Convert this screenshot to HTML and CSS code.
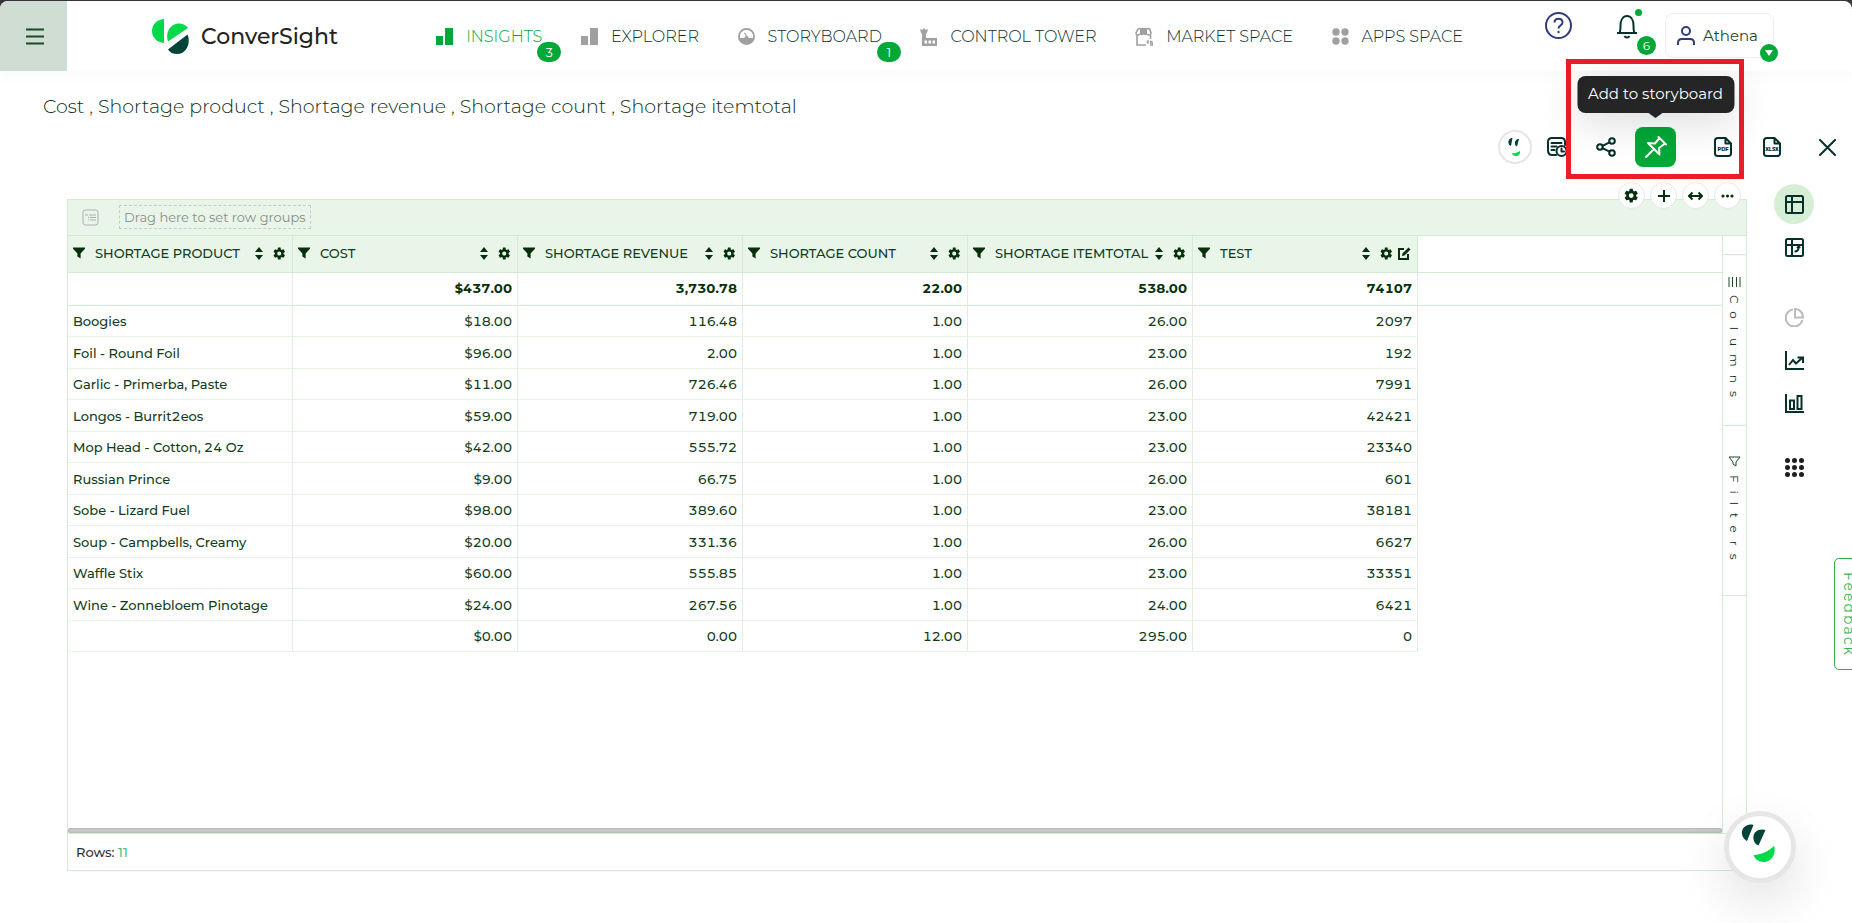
FILE: index.html
```html
<!DOCTYPE html>
<html lang="en">
<head>
  <meta charset="UTF-8">
  <title>ConverSight</title>
  <link rel="stylesheet" href="styles.css">
</head>
<body>
  <!-- shared icons -->
  <svg class="sprite" aria-hidden="true">
    <symbol id="i-filter" viewBox="0 0 12 12"><path d="M0 .5h12v1.2L7.6 6.6V11.5L4.4 9.4V6.6L0 1.7z"/></symbol>
    <symbol id="i-sort" viewBox="0 0 8 13"><path d="M4 0l4 5H0zM4 13L0 8h8z"/></symbol>
    <symbol id="i-gear" viewBox="0 0 24 24"><path d="M19.4 13a7.5 7.5 0 0 0 0-2l2.300-1.800c.3-.2.300-.5.2-.8l-2.200-3.800c-.2-.3-.5-.4-.8-.3l-2.700 1.100a8 8 0 0 0-1.700-1L14 1.600c0-.3-.3-.6-.6-.6H9.600c-.3 0-.6.3-.6.6l-.4 2.800a8 8 0 0 0-1.700 1L4.200 4.300c-.3-.1-.6 0-.8.3L1.200 8.400c-.2.300-.1.600.2.800L3.700 11a7.500 7.500 0 0 0 0 2l-2.300 1.800c-.3.2-.4.5-.2.800l2.200 3.800c.2.300.5.400.8.300l2.700-1.100a8 8 0 0 0 1.700 1l.4 2.800c0 .3.300.6.6.6h3.800c.3 0 .6-.3.6-.6l.4-2.800a8 8 0 0 0 1.700-1l2.700 1.100c.3.100.6 0 .8-.3l2.200-3.800c.2-.3.1-.6-.2-.8zM11.500 15.800a3.800 3.800 0 1 1 0-7.600 3.800 3.800 0 0 1 0 7.600z"/></symbol>
    <symbol id="i-bars" viewBox="0 0 17 17"><path d="M0 8h7v9H0zM9 0h8v17H9z"/></symbol>
  </svg>

  <div class="app">
    <header class="header">
      <button class="menu-btn" aria-label="Menu">
        <svg width="18" height="17" viewBox="0 0 18 17"><path d="M0 1.500h18M0 8.500h18M0 15.500h18"/></svg>
      </button>
      <a class="logo" href="#">
        <svg width="37" height="35" viewBox="0 0 37 35">
          <path fill="#00d94a" d="M12 0v24C5 23.500 0 18.500 0 12S5 .5 12 0z"/>
          <path fill="#00d94a" d="M16 22.500C13 14 18 4.500 27 4.500c3.500 0 7 1.500 9 4.500z"/>
          <path fill="#004438" d="M35.500 15.500C39 23 35 35 25 35c-4 0-7-1.500-9-4.500z"/>
        </svg>
        <span>ConverSight</span>
      </a>
      <nav class="nav">
        <a class="nav-link active" href="#"><svg width="17" height="17"><use href="#i-bars"/></svg>INSIGHTS<span class="badge">3</span></a>
        <a class="nav-link" href="#"><svg width="17" height="17"><use href="#i-bars"/></svg>EXPLORER</a>
        <a class="nav-link" href="#">
          <svg width="17" height="17" viewBox="0 0 17 17"><path fill-rule="evenodd" d="M8.500 0a8.500 8.500 0 1 1 0 17 8.500 8.500 0 0 1 0-17zm0 1.800A6.700 6.700 0 0 0 2 10h4.500a2.200 2.200 0 0 1 1.200-2L6 5l.9-.5L9 7.700c1 .4 1.500 1.300 1.500 2.300H15a6.700 6.700 0 0 0-6.500-8.200z"/></svg>STORYBOARD<span class="badge">1</span></a>
        <a class="nav-link" href="#">
          <svg width="17" height="18" viewBox="0 0 17 18"><path fill-rule="evenodd" d="M3.500 0h1.200v1.600H8L6.800 5.500H6V10h11v8H2V5.500h-.8L0 1.600h3.500zM4.500 12.500v3h2.500v-3zm4 0v3H11v-3zm4 0v3H15v-3z"/></svg>CONTROL TOWER</a>
        <a class="nav-link" href="#">
          <svg width="18" height="18" viewBox="0 0 18 18"><path d="M5 0h7v6.500c-1 1-2.500 1-3.500 0-1 1-2.500 1-3.500 0z"/><path fill="none" stroke="#a0a0a0" stroke-width="1.600" d="M3 .8h11.500L16 5c0 2-2.500 2.800-4 1M3 .8L1 5c0 2 2.500 2.800 4 1M2 7.500V17h9M15.500 7v4"/><path fill="none" stroke="#a0a0a0" stroke-width="1.300" d="M13 12v4M11.500 14h1.500M17.500 13.500h-2v1.700h2V17h-2.500"/></svg>MARKET SPACE</a>
        <a class="nav-link" href="#">
          <svg width="17" height="17" viewBox="0 0 17 17"><circle cx="4" cy="4" r="3.700"/><circle cx="13" cy="4" r="3.700"/><circle cx="4" cy="13" r="3.700"/><circle cx="13" cy="13" r="3.700"/></svg>APPS SPACE</a>
      </nav>
      <div class="header-tools">
        <button class="help-btn" aria-label="Help">
          <svg width="27" height="27" viewBox="0 0 27 27"><circle cx="13.500" cy="13.500" r="12.500"/><path d="M9.500 10.500c0-5 8-5 8 0 0 3-4 3-4 6"/><circle class="dot" cx="13.500" cy="20" r="1.200"/></svg>
        </button>
        <button class="bell-btn" aria-label="Notifications">
          <svg width="22" height="25" viewBox="0 0 22 25"><path d="M1 19h20M3.500 19c1-2 1-4 1-7.500C4.500 6 7 2 11 2s6.500 4 6.500 9.500c0 3.500 0 5.500 1 7.500M8.500 22c1 2 4 2 5 0"/></svg>
          <span class="bell-dot"></span>
          <span class="bell-count">6</span>
        </button>
        <button class="user-btn">
          <svg width="18" height="20" viewBox="0 0 18 20"><circle cx="9" cy="5" r="4"/><path d="M1 19v-2c0-3 2-4 4-4h8c2 0 4 1 4 4v2"/></svg>
          Athena
          <span class="user-arrow"></span>
        </button>
      </div>
    </header>

    <h1 class="title">Cost , Shortage product , Shortage revenue , Shortage count , Shortage itemtotal</h1>

    <div class="toolbar">
      <div class="tool-group">
        <button class="tool" aria-label="Ask Athena">
          <span class="face-circle">
            <svg width="14" height="20" viewBox="0 0 14 20"><path class="face-eye" d="M4.500 1C2 .5 0 3 .5 6c.2 1.500 1 2.500 2.500 3zM11 2C8.500 1.500 6.500 4 7 7c.2 1.500 1 2 2 2.500z"/><path class="face-mouth" d="M4 16c3 .5 6-.5 8-2 .5 3-1.500 5-4 5s-3.500-1-4-3z"/></svg>
          </span>
        </button>
        <button class="tool" aria-label="History">
          <svg width="20" height="20" viewBox="0 0 20 20"><path d="M18 8V5c0-3-1.500-4-4-4H5C2.500 1 1 2.500 1 5v8c0 3 1.500 5 4 5h4M4.500 6h10M4.500 9.500h5M4.500 13h3"/><circle cx="14.500" cy="14" r="5"/><path d="M14.500 11.500v3h2.500"/></svg>
        </button>
      </div>
      <button class="tool" aria-label="Share">
        <svg width="20" height="20" viewBox="0 0 20 20"><circle cx="4" cy="10" r="2.800"/><circle cx="16" cy="4" r="2.800"/><circle cx="16" cy="16" r="2.800"/><path d="M6.500 8.800l7-3.500M6.500 11.200l7 3.500"/></svg>
      </button>
      <div class="pin">
        <button class="tool pin-btn" aria-label="Add to storyboard">
          <svg width="22" height="22" viewBox="0 0 22 22"><path d="M13.500 1l7.500 7.500M14.500 2L10 7.500l-7-.5 11.500 11.500-.5-6.500L20 7.500M8.500 13.500L1 21"/></svg>
        </button>
        <div class="highlight"></div>
        <div class="tooltip" role="tooltip">Add to storyboard</div>
      </div>
      <button class="tool" aria-label="Export PDF">
        <svg width="18" height="20" viewBox="0 0 18 20"><path d="M11.500 1H4C2 1 1 2 1 3.500v13C1 18 2 19 4 19h10c2 0 3-1 3-2.500v-10L11.500 1v5.500H17"/><text x="9" y="14">PDF</text></svg>
      </button>
      <button class="tool tool-xlsx" aria-label="Export XLSX">
        <svg width="18" height="20" viewBox="0 0 18 20"><path d="M11.500 1H4C2 1 1 2 1 3.500v13C1 18 2 19 4 19h10c2 0 3-1 3-2.500v-10L11.500 1v5.500H17"/><text x="9" y="14">XLSX</text></svg>
      </button>
      <button class="tool" aria-label="Close">
        <svg width="17" height="17" viewBox="0 0 17 17"><path d="M1 1l15 15M16 1L1 16"/></svg>
      </button>
    </div>

    <main class="workspace">
      <section class="grid">
        <div class="grid-actions">
          <button aria-label="Settings"><svg width="15" height="15"><use href="#i-gear"/></svg></button>
          <button aria-label="Add column"><svg width="12" height="12" viewBox="0 0 12 12"><path class="line" d="M6 0v12M0 6h12"/></svg></button>
          <button aria-label="Fit width"><svg width="15" height="10" viewBox="0 0 15 10"><path class="line" d="M1 5h13M4.500 1.500L1 5l3.500 3.500M10.500 1.500L14 5l-3.500 3.500"/></svg></button>
          <button aria-label="More"><svg width="13" height="4" viewBox="0 0 13 4"><circle cx="2" cy="2" r="1.600"/><circle cx="6.500" cy="2" r="1.600"/><circle cx="11" cy="2" r="1.600"/></svg></button>
        </div>

        <div class="group-bar">
          <svg width="17" height="17" viewBox="0 0 17 17"><rect x="1" y="1" width="15" height="15" rx="2.500"/><path d="M3 6h3M7 6h7M6 8.500h1M8 8.500h6M6 11h1M8 11h6"/></svg>
          <span class="drop-zone">Drag here to set row groups</span>
        </div>

        <div class="grid-body">
          <div class="table-pane">
            <table>
              <colgroup>
                <col class="col"><col class="col"><col class="col"><col class="col"><col class="col"><col class="col"><col>
              </colgroup>
              <thead>
                <tr>
                  <th><div class="head"><svg width="12" height="12"><use href="#i-filter"/></svg><span>SHORTAGE PRODUCT</span><svg width="8" height="13"><use href="#i-sort"/></svg><svg width="13" height="13"><use href="#i-gear"/></svg></div></th>
                  <th><div class="head"><svg width="12" height="12"><use href="#i-filter"/></svg><span>COST</span><svg width="8" height="13"><use href="#i-sort"/></svg><svg width="13" height="13"><use href="#i-gear"/></svg></div></th>
                  <th><div class="head"><svg width="12" height="12"><use href="#i-filter"/></svg><span>SHORTAGE REVENUE</span><svg width="8" height="13"><use href="#i-sort"/></svg><svg width="13" height="13"><use href="#i-gear"/></svg></div></th>
                  <th><div class="head"><svg width="12" height="12"><use href="#i-filter"/></svg><span>SHORTAGE COUNT</span><svg width="8" height="13"><use href="#i-sort"/></svg><svg width="13" height="13"><use href="#i-gear"/></svg></div></th>
                  <th><div class="head"><svg width="12" height="12"><use href="#i-filter"/></svg><span>SHORTAGE ITEMTOTAL</span><svg width="8" height="13"><use href="#i-sort"/></svg><svg width="13" height="13"><use href="#i-gear"/></svg></div></th>
                  <th><div class="head"><svg width="12" height="12"><use href="#i-filter"/></svg><span>TEST</span><svg width="8" height="13"><use href="#i-sort"/></svg><svg width="13" height="13"><use href="#i-gear"/></svg><svg class="edit" width="13" height="13" viewBox="0 0 13 13"><path d="M6 2H1v10h9V7"/><path class="pen" d="M4 9l.5-2.500L10.500.5l2 2-6 6z"/></svg></div></th>
                  <td></td>
                </tr>
                <tr class="totals"><td></td><td>$437.00</td><td>3,730.78</td><td>22.00</td><td>538.00</td><td>74107</td><td></td></tr>
              </thead>
              <tbody>
                <tr><td>Boogies</td><td>$18.00</td><td>116.48</td><td>1.00</td><td>26.00</td><td>2097</td><td></td></tr>
                <tr><td>Foil - Round Foil</td><td>$96.00</td><td>2.00</td><td>1.00</td><td>23.00</td><td>192</td><td></td></tr>
                <tr><td>Garlic - Primerba, Paste</td><td>$11.00</td><td>726.46</td><td>1.00</td><td>26.00</td><td>7991</td><td></td></tr>
                <tr><td>Longos - Burrit2eos</td><td>$59.00</td><td>719.00</td><td>1.00</td><td>23.00</td><td>42421</td><td></td></tr>
                <tr><td>Mop Head - Cotton, 24 Oz</td><td>$42.00</td><td>555.72</td><td>1.00</td><td>23.00</td><td>23340</td><td></td></tr>
                <tr><td>Russian Prince</td><td>$9.00</td><td>66.75</td><td>1.00</td><td>26.00</td><td>601</td><td></td></tr>
                <tr><td>Sobe - Lizard Fuel</td><td>$98.00</td><td>389.60</td><td>1.00</td><td>23.00</td><td>38181</td><td></td></tr>
                <tr><td>Soup - Campbells, Creamy</td><td>$20.00</td><td>331.36</td><td>1.00</td><td>26.00</td><td>6627</td><td></td></tr>
                <tr><td>Waffle Stix</td><td>$60.00</td><td>555.85</td><td>1.00</td><td>23.00</td><td>33351</td><td></td></tr>
                <tr><td>Wine - Zonnebloem Pinotage</td><td>$24.00</td><td>267.56</td><td>1.00</td><td>24.00</td><td>6421</td><td></td></tr>
                <tr><td></td><td>$0.00</td><td>0.00</td><td>12.00</td><td>295.00</td><td>0</td><td></td></tr>
              </tbody>
            </table>
            <div class="scrollbar"></div>
          </div>
          <div class="side-tabs">
            <button class="side-tab">
              <svg width="13" height="10" viewBox="0 0 13 10"><path d="M1 0v10M4.500 0v10M8.500 0v10M12 0v10"/></svg>
              <span>Columns</span>
            </button>
            <button class="side-tab">
              <svg width="13" height="11" viewBox="0 0 13 11"><path d="M1 1h11L8 6v4L5 8V6z"/></svg>
              <span>Filters</span>
            </button>
          </div>
        </div>

        <div class="grid-footer">Rows: <span>11</span></div>
      </section>

      <aside class="rail">
        <button class="rail-btn selected" aria-label="Table"><svg viewBox="0 0 19 19"><rect x="1" y="1" width="17" height="17" rx="1.500"/><path d="M7 1v17M1 7h17"/></svg></button>
        <button class="rail-btn" aria-label="Pivot table"><svg viewBox="0 0 19 19"><rect x="1" y="1" width="17" height="17" rx="1.500"/><path d="M7 1v17M1 7h17M9.500 13.500c3 0 4-1.500 4-4M12 10l1.700-1.500L15 10"/></svg></button>
        <button class="rail-btn charts muted" aria-label="Pie chart"><svg viewBox="0 0 19 19"><path d="M8 1.500A8.500 8.500 0 1 0 17.500 12M10 1v8.500h8A8 8 0 0 0 10 1z"/></svg></button>
        <button class="rail-btn" aria-label="Line chart"><svg viewBox="0 0 19 19"><path d="M1 0v18h18M4 14l4-5 3 3.500L17 7M12.500 6.500H18V12"/></svg></button>
        <button class="rail-btn" aria-label="Bar chart"><svg viewBox="0 0 19 19"><path d="M1 0v18h18M5 6.500h4V15H5zM12.500 2h4v13h-4z"/></svg></button>
        <button class="rail-btn more" aria-label="All charts"><svg viewBox="0 0 19 19"><path class="dots" d="M2.500 2.500h0M9.500 2.500h0M16.500 2.500h0M2.500 9.500h0M9.500 9.500h0M16.500 9.500h0M2.500 16.500h0M9.500 16.500h0M16.500 16.500h0"/></svg></button>
      </aside>
    </main>
  </div>

  <button class="feedback">Feedback</button>
  <button class="chat-btn" aria-label="Chat">
    <svg width="34" height="38" viewBox="0 0 34 38"><path class="face-eye" d="M12.500 1C6-1 0 4 1 10c.4 3 2.300 5.500 5 7zM24.500 6c-7-2-13 2-12 9 .4 3 2 5.500 5 6.500z"/><path class="face-mouth" d="M12.500 31C20 30.500 27 27.500 33 22c2.500 7-2 16-10 16-6 0-9-3-10.500-7z"/></svg>
  </button>
</body>
</html>
```
FILE: styles.css
```css
* {
  box-sizing: border-box;
}

body {
  margin: 0;
  padding-top: 1px;
  background: #38343a;
  color: #0b2f12;
  font-family: Montserrat, Inter, sans-serif;
  font-size: 13px;
  overflow-x: hidden;
}

button {
  padding: 0;
  border: none;
  background: none;
  color: inherit;
  font: inherit;
  cursor: pointer;
}

a {
  color: inherit;
  text-decoration: none;
}

svg {
  flex: none;
  display: block;
}

.sprite {
  position: absolute;
  width: 0;
  height: 0;
}

.face-eye {
  fill: #004438;
}

.face-mouth {
  fill: #00d94a;
}

.app {
  display: flex;
  flex-direction: column;
  min-height: calc(100vh - 1px);
  background: #fff;
  border-radius: 8px 8px 0 0;
}

/* header */
.header {
  display: flex;
  height: 70px;
  box-shadow: 0 8px 12px rgba(0, 0, 0, 0.02);
}

.menu-btn {
  display: flex;
  align-items: center;
  justify-content: center;
  width: 67px;
  padding-left: 3px;
  background: #cfddd3;
  border-radius: 8px 0 0 0;
}

.menu-btn svg {
  stroke: #1c4a24;
  stroke-width: 2;
}

.logo {
  display: flex;
  align-items: center;
  gap: 12px;
  margin-left: 85px;
  color: #222;
  font-size: 22px;
  font-weight: 500;
}

.nav {
  flex: 1;
  display: flex;
  align-items: center;
  justify-content: space-between;
  margin: 0 82px 0 98px;
  padding-top: 1px;
  color: #06302a;
  font-size: 16px;
  font-weight: 300;
}

.nav-link {
  position: relative;
  display: flex;
  align-items: center;
  gap: 13px;
  line-height: 20px;
  white-space: nowrap;
}

.nav-link svg {
  fill: #a0a0a0;
}

.nav-link.active {
  color: #00a838;
}

.nav-link.active svg {
  fill: #00a838;
}

.badge {
  position: absolute;
  top: 15px;
  right: -19px;
  width: 24px;
  height: 20px;
  border-radius: 10px;
  background: #00a838;
  color: #fff;
  font-size: 13px;
  font-weight: 400;
  text-align: center;
}

.header-tools {
  display: flex;
  align-items: flex-start;
  padding: 11px 78px 0 0;
}

.help-btn svg {
  fill: none;
  stroke: #2f3c78;
  stroke-width: 2;
}

.help-btn .dot {
  fill: #2f3c78;
  stroke: none;
}

.bell-btn {
  position: relative;
  margin: 2px 27px 0 44px;
}

.bell-btn svg {
  fill: none;
  stroke: #06302a;
  stroke-width: 2;
}

.bell-dot {
  position: absolute;
  top: -5px;
  right: -4px;
  width: 7px;
  height: 7px;
  border-radius: 50%;
  background: #00a838;
}

.bell-count {
  position: absolute;
  top: 22px;
  right: -18px;
  width: 19px;
  height: 19px;
  border-radius: 50%;
  background: #00a838;
  color: #fff;
  font-size: 12px;
  line-height: 19px;
}

.user-btn {
  position: relative;
  display: flex;
  align-items: center;
  gap: 8px;
  width: 109px;
  height: 45px;
  margin-top: 1px;
  padding-left: 11px;
  border: 1px solid #eee;
  border-radius: 8px;
  color: #1c4a24;
  font-size: 15px;
}

.user-btn svg {
  fill: none;
  stroke: #2f3c78;
  stroke-width: 2;
}

.user-arrow {
  position: absolute;
  right: -5px;
  bottom: -5px;
  display: flex;
  align-items: center;
  justify-content: center;
  width: 18px;
  height: 18px;
  border-radius: 50%;
  background: #00a838;
}

.user-arrow::after {
  content: "";
  border: 4px solid transparent;
  border-top: 6px solid #fff;
  border-bottom: none;
}

/* title and toolbar */
.title {
  margin: 0;
  padding: 25px 43px 9px;
  font-size: 19px;
  font-weight: 300;
  line-height: 22px;
}

.toolbar {
  display: flex;
  justify-content: flex-end;
  gap: 9px;
  padding-right: 5px;
}

.tool-group {
  display: flex;
}

.tool {
  display: flex;
  align-items: center;
  justify-content: center;
  width: 40px;
  height: 40px;
}

.tool svg {
  fill: none;
  stroke: #06302a;
  stroke-width: 2;
  stroke-linecap: round;
  stroke-linejoin: round;
}

.tool text {
  fill: #06302a;
  stroke: none;
  font-size: 5px;
  font-weight: 800;
  text-anchor: middle;
}

.tool-xlsx {
  margin-right: 6px;
}

.face-circle {
  display: flex;
  align-items: center;
  justify-content: center;
  width: 34px;
  height: 34px;
  margin-right: 4px;
  border: 2px solid #e6e6e6;
  border-radius: 50%;
  background: #fff;
}

.face-circle svg {
  stroke: none;
}

.pin {
  position: relative;
  margin-right: 18px;
}

.pin-btn {
  width: 41px;
  border-radius: 8px;
  background: #00a838;
}

.pin-btn svg {
  stroke: #fff;
}

.highlight {
  position: absolute;
  top: -68px;
  left: -69px;
  width: 178px;
  height: 120px;
  border: 5px solid #ee1c24;
  pointer-events: none;
}

.tooltip {
  position: absolute;
  bottom: 54px;
  left: 50%;
  transform: translateX(-50%);
  padding: 8px 11px 9px;
  border-radius: 8px;
  background: #252525;
  box-shadow: 0 10px 40px rgba(0, 0, 0, 0.15);
  color: #fff;
  font-size: 15px;
  line-height: 20px;
  white-space: nowrap;
}

.tooltip::after {
  content: "";
  position: absolute;
  top: 100%;
  left: 50%;
  margin-left: -7px;
  border: 7px solid transparent;
  border-top: 5px solid #252525;
  border-bottom: none;
}

/* data grid */
.workspace {
  flex: 1;
  display: flex;
  padding: 17px 0 52px 67px;
}

.grid {
  position: relative;
  flex: 1;
  display: flex;
  flex-direction: column;
  margin-top: 15px;
  border: 1px solid #d3ebd3;
}

.grid-actions {
  position: absolute;
  top: -18px;
  right: 5px;
  display: flex;
  gap: 5px;
}

.grid-actions button {
  display: flex;
  align-items: center;
  justify-content: center;
  width: 27px;
  height: 27px;
  border: 1px solid #e6e6e6;
  border-radius: 50%;
  background: #fff;
}

.grid-actions svg {
  fill: #06300c;
}

.grid-actions .line {
  fill: none;
  stroke: #06300c;
  stroke-width: 2;
}

.group-bar {
  display: flex;
  align-items: center;
  gap: 20px;
  height: 36px;
  padding: 0 0 1px 14px;
  border-bottom: 1px solid #d3ebd3;
  background: #eaf5ea;
}

.group-bar svg {
  fill: none;
  stroke: #a9b1a9;
}

.drop-zone {
  padding: 2px 4px;
  border: 1px dashed #c4cec4;
  color: #869086;
  line-height: 18px;
}

.grid-body {
  flex: 1;
  display: flex;
}

.table-pane {
  flex: 1;
  display: flex;
  flex-direction: column;
  justify-content: space-between;
}

table {
  width: 100%;
  table-layout: fixed;
  border-collapse: separate;
  border-spacing: 0;
  color: #123c1a;
  font-weight: 500;
  font-variant-numeric: tabular-nums;
}

.col {
  width: 225px;
}

th {
  height: 37px;
  padding: 0 6px 2px 5px;
  border-right: 1px solid #d3ebd3;
  border-bottom: 1px solid #d3ebd3;
  background: #eaf5ea;
  font-weight: 500;
}

.head {
  display: flex;
  align-items: center;
  gap: 10px;
  text-align: left;
  white-space: nowrap;
}

.head span {
  flex: 1;
  min-width: 0;
}

.head svg {
  fill: #06300c;
}

.head .edit {
  margin-left: -5px;
  fill: none;
  stroke: #06300c;
  stroke-width: 2;
}

.head .pen {
  fill: #06300c;
  stroke: none;
}

td {
  height: 31px;
  padding: 0 5px;
  border-right: 1px solid #dff0df;
  border-bottom: 1px solid #e6f4e6;
  text-align: right;
}

td:first-child {
  text-align: left;
}

td:last-child {
  border: none;
}

tbody tr:nth-child(even) td {
  height: 32px;
}

thead td:last-child {
  border-bottom: 1px solid #d3ebd3;
}

.totals td {
  height: 33px;
  padding-bottom: 2px;
  border-bottom: 1px solid #d3ebd3;
  color: #06300c;
  font-weight: 700;
}

.scrollbar {
  height: 5px;
  border-radius: 3px;
  background: #c8c8c8;
  box-shadow: inset 0 0 2px #999;
}

.side-tabs {
  width: 24px;
  padding-top: 18px;
  border-left: 1px solid #d3ebd3;
}

.side-tab {
  display: flex;
  flex-direction: column;
  align-items: center;
  gap: 8px;
  width: 100%;
  height: 171px;
  padding-top: 22px;
  border-top: 1px solid #d3ebd3;
  font-size: 12px;
}

.side-tab:last-child {
  padding-top: 30px;
  border-bottom: 1px solid #d3ebd3;
}

.side-tab svg {
  fill: none;
  stroke: #1c4a24;
}

.side-tab span {
  writing-mode: vertical-rl;
  letter-spacing: 8px;
}

.grid-footer {
  height: 37px;
  padding: 0 8px;
  border-top: 1px solid #d3ebd3;
  color: #333;
  font-size: 13px;
  font-weight: 500;
  line-height: 36px;
}

.grid-footer span {
  color: #4fc07c;
}

/* chart type rail */
.rail {
  display: flex;
  flex-direction: column;
  gap: 3px;
  width: 105px;
  padding-left: 27px;
}

.rail-btn {
  display: flex;
  align-items: center;
  justify-content: center;
  width: 40px;
  height: 40px;
  border-radius: 50%;
}

.rail-btn svg {
  width: 19px;
  height: 19px;
  fill: none;
  stroke: #06302a;
  stroke-width: 2;
}

.rail-btn.selected {
  background: #d6eed6;
}

.rail-btn.charts {
  margin-top: 27px;
}

.rail-btn.muted svg {
  stroke: #bbb;
}

.rail-btn.more {
  margin-top: 21px;
}

.rail-btn .dots {
  stroke: #1d1d1d;
  stroke-width: 5;
  stroke-linecap: round;
}

/* floating buttons */
.feedback {
  position: fixed;
  top: 558px;
  right: -11px;
  width: 29px;
  height: 112px;
  border: 1px solid #2fae48;
  border-radius: 5px;
  background: #fff;
  color: #3fb556;
  font-size: 14px;
  letter-spacing: 2px;
  writing-mode: vertical-rl;
}

.chat-btn {
  position: fixed;
  right: 56px;
  bottom: 40px;
  display: flex;
  justify-content: center;
  width: 72px;
  height: 72px;
  padding: 8px 4px 0 0;
  border: 5px solid #e6e6e6;
  border-radius: 50%;
  background: #fff;
  box-shadow: 0 20px 50px rgba(0, 0, 0, 0.12);
}
```
